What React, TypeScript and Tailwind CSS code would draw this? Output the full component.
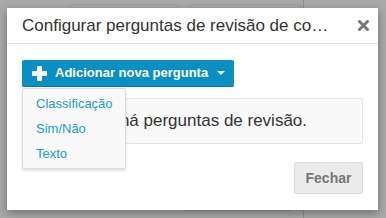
import React from "react";

const font = { fontFamily: '"Liberation Sans", Arial, sans-serif' };

function PlusIcon() {
  return (
    <svg width="15" height="15" viewBox="0 0 15 15" className="shrink-0">
      <rect x="5" y="0" width="5" height="15" rx="1" fill="#fff" />
      <rect x="0" y="5" width="15" height="5" rx="1" fill="#fff" />
    </svg>
  );
}

function CloseIcon() {
  return (
    <svg width="11" height="11" viewBox="0 0 11 11">
      <path d="M1.5 1.5 L9.5 9.5 M9.5 1.5 L1.5 9.5" stroke="#777" strokeWidth="3" strokeLinecap="round" />
    </svg>
  );
}

export default function App() {
  return (
    <div className="relative h-[218px] w-[386px] overflow-hidden bg-[#a9a9a9]" style={font}>
      {/* página por trás do modal */}
      <div className="absolute left-[70px] top-[4px] h-[8px] w-[108px] rounded-sm border border-[#9f9f9f]" />
      <div className="absolute left-[190px] top-[4px] h-[8px] w-[112px] rounded-sm border border-[#9f9f9f]" />
      <div className="absolute left-[303px] top-0 h-[8px] w-px bg-[#8f8f8f]" />
      <div className="absolute left-[303px] top-[210px] h-[8px] w-px bg-[#8f8f8f]" />
      <div className="absolute left-[184px] top-[210px] h-px w-[108px] bg-[#999]" />

      <div className="pl-[7px] pt-[8px]">
        <div className="relative flex h-[202px] w-[371px] flex-col bg-white shadow-[0_3px_9px_rgba(0,0,0,0.35)]">
          {/* cabeçalho */}
          <div className="flex h-[36px] shrink-0 items-center border-b border-[#e5e5e5] pl-[15px] pr-[7px]">
            <div className="min-w-0 flex-1 truncate text-[17px] leading-[22px] text-[#333]">
              Configurar perguntas de revisão de conteúdo
            </div>
            <div className="ml-[18px] flex w-[16px] justify-center">
              <CloseIcon />
            </div>
          </div>

          {/* corpo */}
          <div className="relative flex flex-col px-[15px] pt-[16px]">
            <button className="flex h-[27px] w-[212px] items-center gap-[8px] rounded-[2px] border-b border-[#087aa6] bg-[#0b8ec2] pl-[10px] text-[13px] font-bold text-white">
              <PlusIcon />
              <span>Adicionar nova pergunta</span>
              <span className="ml-[1px] h-0 w-0 border-x-[4px] border-t-[4px] border-x-transparent border-t-white" />
            </button>

            <div className="mt-[11px] flex h-[46px] items-center rounded-[2px] border border-[#e3e3e3] bg-[#f9f9f9] pl-[61px] text-[17px] text-[#333]">
              Não há perguntas de revisão.
            </div>

            {/* menu suspenso */}
            <div className="absolute left-[15px] top-[44px] flex w-[104px] flex-col rounded-[2px] border border-[#dcdcdc] bg-[#f9f9f9] py-[2px] shadow-[0_2px_3px_rgba(0,0,0,0.12)]">
              <div className="flex h-[25px] items-center pl-[13px] text-[13px] text-[#1a9ad6]">Classificação</div>
              <div className="flex h-[25px] items-center pl-[13px] text-[13px] text-[#1a9ad6]">Sim/Não</div>
              <div className="flex h-[25px] items-center pl-[13px] text-[13px] text-[#1a9ad6]">Texto</div>
            </div>
          </div>

          {/* rodapé */}
          <div className="flex justify-end px-[15px] pt-[18px]">
            <button className="h-[32px] w-[69px] rounded-[2px] border border-[#dcdcdc] bg-[#ebebeb] text-[14px] font-bold text-[#777]">
              Fechar
            </button>
          </div>
        </div>
      </div>
    </div>
  );
}
